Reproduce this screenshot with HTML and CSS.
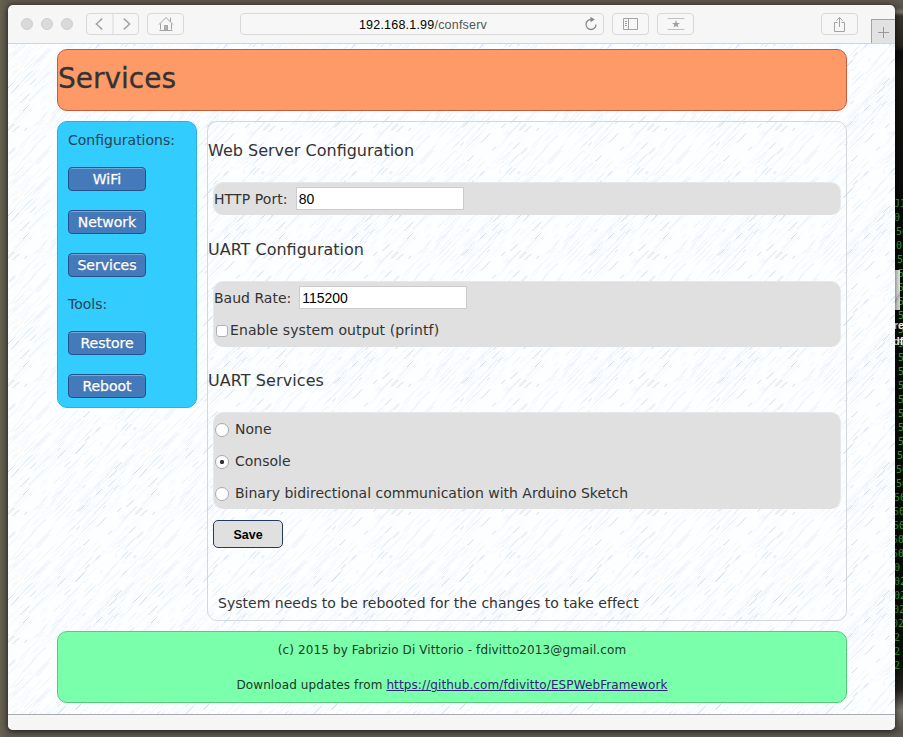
FILE: index.html
```
<!DOCTYPE html>
<html lang="en">
<head>
<meta charset="utf-8">
<title>Services</title>
<link rel="stylesheet" href="styles.css">
</head>
<body>
<div class="terminal" aria-hidden="true">
  <span class="a">J1</span><span class="a">0</span><span class="b">50</span><span class="b">0</span><span class="c">50</span><span class="d">5</span><span class="d">5</span><span class="d">5</span><span class="d">5</span><span class="d">5</span><span class="d">5</span><span class="d">5</span><span class="d">5</span><span class="d">5</span><span class="d">5</span><span class="d">5</span><span class="d">5</span><span class="d">5</span><span class="c">50</span><span class="b">50</span><span class="b">50</span><span class="a">50</span><span class="e">50</span><span class="e">50</span><span class="f">50</span><span class="f">50</span><span class="a">0</span><span class="a">02</span><span class="a">02</span><span class="e">02</span><span class="f">02</span><span class="a">2</span><span class="a">2</span><span class="a">2</span>
</div>
<div class="desk-icon"><div class="thumb"></div><div class="desk-label">tre<br>.df</div></div>

<div class="window">
  <div class="toolbar">
    <div class="lights"><i></i><i></i><i></i></div>
    <div class="btn nav">
      <svg width="52" height="20" viewBox="0 0 52 20"><path d="M15.5 4.5 9.5 10l6 5.500M37.500 4.500l6 5.500-6 5.500" fill="none" stroke="#a3a3a3" stroke-width="1.5"/><path d="M26.500 0v20" stroke="#d8d8d8"/></svg>
    </div>
    <div class="btn home">
      <svg width="16" height="16" viewBox="0 0 16 16" fill="none" stroke="#a3a3a3"><path d="M1 8.500 8 1.500l7 7M2.500 7.500v6M13.500 7.500v6M12.500 5.500v-4M1.500 14.500h13"/><path d="M6.500 14v-4.500h3V14z" fill="#b5b5b5"/></svg>
    </div>
    <div class="address"><span>192.168.1.99<em>/confserv</em></span>
      <svg class="reload" width="14" height="16" viewBox="0 0 14 16"><path d="M7.200 3.500A5 5 0 1 0 12 8.500" fill="none" stroke="#888" stroke-width="1.300"/><path d="M6.500.7l4.300 2.800-4.300 2.700z" fill="#888"/></svg>
    </div>
    <div class="btn side">
      <svg width="16" height="14" viewBox="0 0 16 14" fill="none" stroke="#a3a3a3"><path d="M.5 1.500h14v11H.5zM5.500 1.500v11M2 4.500h2M2 6.500h2M2 8.500h2"/></svg>
    </div>
    <div class="btn star">
      <svg width="18" height="14" viewBox="0 0 18 14"><path d="M.5 1.500h17M.5 12.500h17" stroke="#c0c0c0"/><path d="M9 3l1 2.900h3L10.600 7.700l.9 2.900L9 8.900l-2.500 1.700.9-2.900L5 5.900h3z" fill="#a0a0a0"/></svg>
    </div>
    <div class="btn share">
      <svg width="13" height="17" viewBox="0 0 13 17" fill="none" stroke="#a3a3a3"><path d="M4.500 6.500h-3v9h10v-9h-3M6.500 11V1.500M3.500 4.500l3-3 3 3"/></svg>
    </div>
    <div class="newtab"><svg width="12" height="12" viewBox="0 0 12 12"><path d="M0 6.500h11M5.500 1v11" stroke="#999"/></svg></div>
  </div>

  <div class="viewport">
    <svg class="texture" width="887" height="670"><defs><pattern id="hatch" x="49" y="0" width="128" height="128" patternUnits="userSpaceOnUse"><rect width="128" height="128" fill="#fdfeff"/><g id="strokes"></g></pattern></defs><rect width="887" height="670" fill="url(#hatch)"/></svg>
    <div class="page">
      <header><h1>Services</h1></header>
      <div class="columns">
        <nav>
          <p>Configurations:</p>
          <a>WiFi</a><a>Network</a><a>Services</a>
          <p class="tools">Tools:</p>
          <a>Restore</a><a>Reboot</a>
        </nav>
        <main>
          <h2>Web Server Configuration</h2>
          <section><div class="row"><span class="wide">HTTP Port:</span><input class="port" type="text" value="80"></div></section>
          <h2>UART Configuration</h2>
          <section class="uart">
            <div class="row">Baud Rate:<input class="baud" type="text" value="115200"></div>
            <label class="row"><i class="check"></i><span class="wide">Enable system output (printf)</span></label>
          </section>
          <h2 class="last">UART Services</h2>
          <section>
            <label class="row"><i class="radio"></i>None</label>
            <label class="row"><i class="radio on"></i>Console</label>
            <label class="row"><i class="radio"></i>Binary bidirectional communication with Arduino Sketch</label>
          </section>
          <button>Save</button>
          <p class="note">System needs to be rebooted for the changes to take effect</p>
        </main>
      </div>
      <footer>
        <p>(c) 2015 by Fabrizio Di Vittorio - fdivitto2013@gmail.com</p>
        <p>Download updates from <a href="#">https://github.com/fdivitto/ESPWebFramework</a></p>
      </footer>
    </div>
  </div>
  <div class="statusbar"></div>
</div>
<script src="script.js"></script>
</body>
</html>
```
FILE: styles.css
```
* { box-sizing: border-box; }
body {
  margin: 0; width: 903px; height: 737px; overflow: hidden; position: relative;
  padding: 5px 8px 7px;
  background: linear-gradient(90deg, #67614f 0, #5c574d 8px, transparent 9px),
    linear-gradient(#5f594d 0, #57524a 8px, #77736a 12px, #37342c 16px, #24231d 46px, #0b0b09 52px, #151510 75px, #080a07 200px, #081007 660px, #25231f 690px, #77736d 710px, #555049 730px, #5e5a50 737px);
  color: #333; font-family: Verdana, "DejaVu Sans", sans-serif; font-size: 14px;
}
p, h1, h2 { margin: 0; font-weight: normal; }

.terminal { position: absolute; left: 892px; top: 197px; width: 11px; overflow: hidden; font: 10px/14px "DejaVu Sans Mono", monospace; color: #369a2b; }
.terminal span { display: block; white-space: nowrap; }
.a { padding-left: 2px; } .b { padding-left: 4px; } .c { padding-left: 5px; } .d { padding-left: 6px; } .e { padding-left: 1px; } .f { padding-left: 0; }
.desk-icon { position: absolute; left: 890px; top: 270px; width: 13px; overflow: hidden; color: #fff; font: bold 11px/16px "Liberation Sans", sans-serif; }
.thumb { width: 10px; height: 40px; margin-bottom: 7px; background: linear-gradient(120deg, #e8e8e8 65%, #bbb 70%, #dedede 78%); }

.window { position: relative; width: 887px; height: 725px; border-radius: 5px; overflow: hidden; background: #f6f6f6; box-shadow: 0 1px 6px rgba(0,0,0,.7); }
.toolbar { height: 39px; display: flex; align-items: center; padding-left: 13px; border-bottom: 1px solid #d0d4d4; }
.lights { display: flex; gap: 8px; margin-right: 13px; }
.lights i { width: 12px; height: 12px; border-radius: 50%; background: #dadada; border: 1px solid #cecece; }
.btn { height: 22px; border: 1px solid #d8d8d8; border-radius: 4px; display: flex; align-items: center; justify-content: center; background: #f7f7f7; }
.nav { width: 53px; margin-right: 8px; }
.home, .side, .star, .share { width: 37px; }
.address { width: 364px; height: 22px; margin: 0 8px 0 56px; border: 1px solid #d8d8d8; border-radius: 4px; display: flex; align-items: center; justify-content: center; position: relative; font: 12.5px "Liberation Sans", sans-serif; color: #000; background: #f7f7f7; letter-spacing: .21px; padding: 1px 0 0 2px; }
.address em { font-style: normal; color: #555; }
.reload { position: absolute; right: 5px; top: 2px; }
.star { margin-left: 8px; }
.share { margin-left: 127px; }
.newtab { width: 24px; height: 24px; margin-left: 13px; align-self: flex-end; border: 1px solid #a4a4a4; border-width: 1px 0 0 1px; background: #e2e2e2; display: flex; align-items: center; justify-content: center; }

.viewport { height: 670px; position: relative; background: #fdfeff; }
.texture { position: absolute; left: 0; top: 0; }
.page { position: relative; width: 790px; margin-left: 49px; padding-top: 5px; }
header { height: 62px; border: 1px solid #c65a3c; border-radius: 10px; background: #fd9a67; }
h1 { font-size: 28px; line-height: 36px; padding: 11px 0 0; -webkit-text-stroke: .3px #333; }
.columns { display: flex; align-items: flex-start; gap: 10px; margin: 10px 0; }
nav { width: 140px; height: 287px; padding: 9px 10px; border: 1px solid #2bb0df; border-radius: 10px; background: #33ccff; color: #234450; }
nav p { height: 18px; line-height: 18px; }
nav p.tools { margin-top: 18px; }
nav a { display: block; width: 78px; height: 24px; margin-top: 19px; border: 1px solid #24518b; border-radius: 4px; background: #4479ba; box-shadow: inset 0 1px 0 #7aa5d8; color: #fff; text-align: center; line-height: 22px; text-shadow: 0 -1px 0 rgba(0,0,0,.4); -webkit-text-stroke: .3px #fff; }
nav p + a { margin-top: 18px; }
main { width: 640px; height: 500px; border: 1px solid #d4d8dc; border-radius: 10px; }
h2 { font-size: 16px; line-height: 20px; margin: 25px 0 21px; }
h2:first-child { margin-top: 19px; }
h2.last { margin-top: 24px; letter-spacing: .08px; }
section { width: 628px; margin-left: 5px; border: 1px solid #e7e8ea; border-width: 1px 1px 0; border-radius: 10px; background: #e0e0e0; overflow: hidden; }
.uart { padding-bottom: 1px; }
.row { display: flex; align-items: center; height: 32px; }
.wide { letter-spacing: .09px; }
input { width: 168px; height: 23px; margin-bottom: 1px; border: 1px solid #ccc; padding: 1px 2px; font: 14px "Liberation Sans", sans-serif; color: #000; background: #fff; }
.port { margin-left: 8px; } .baud { margin-left: 8px; }
.check { width: 12px; height: 12px; margin: 2px 2px 0; border: 1px solid #b0b0b0; border-radius: 3px; background: #fff; }
.radio { width: 14px; height: 14px; margin: 2px 6px 0 1px; border: 1px solid #aaa; border-radius: 50%; background: #fff; }
.radio.on { background: radial-gradient(circle, #333 0 1.800px, #fff 2.500px); }
button { display: block; width: 70px; height: 28px; margin: 11px 0 0 5px; border: 1px solid #23386b; border-radius: 5px; background: #e0e0e0; color: #000; font: bold 12.5px "Liberation Sans", sans-serif; padding: 1px 0 0; }
.note { margin: 46px 0 0 10px; line-height: 18px; letter-spacing: .025px; }
footer { height: 72px; border: 1px solid #58c87a; border-radius: 10px; background: #7affab; text-align: center; font-size: 12px; color: #1d3828; padding-top: 10px; letter-spacing: .11px; }
footer p { line-height: 16px; margin-bottom: 19px; }
footer a { color: #35207f; }
.statusbar { height: 16px; border-top: 1px solid #a8acb0; background: #f6f6f6; }
```
FILE: script.js
```
// Fill the repeating 128px tile with short, uneven pencil strokes.
const group = document.getElementById("strokes");
let seed = 977;
const rnd = () => (seed = (seed * 16807) % 2147483647) / 2147483647;
const layers = [["#e6f0fc", 190, 22, 0.5], ["#d3e2f7", 100, 15, 0.45], ["#a3bce0", 34, 8, 0.5]];
for (const [color, count, size, width] of layers) {
  let d = "";
  for (let i = 0; i < count; i++) {
    const x = rnd() * 128, y = rnd() * 128, l = 2 + rnd() * size;
    for (const dx of [0, -128]) for (const dy of [0, 128]) {
      d += `M${(x + dx).toFixed(1)} ${(y + dy).toFixed(1)}l${l.toFixed(1)} ${(-l * 1.02).toFixed(1)}`;
    }
  }
  const p = document.createElementNS("http://www.w3.org/2000/svg", "path");
  p.setAttribute("d", d);
  p.setAttribute("stroke", color);
  p.setAttribute("stroke-width", width);
  group.appendChild(p);
}
```
